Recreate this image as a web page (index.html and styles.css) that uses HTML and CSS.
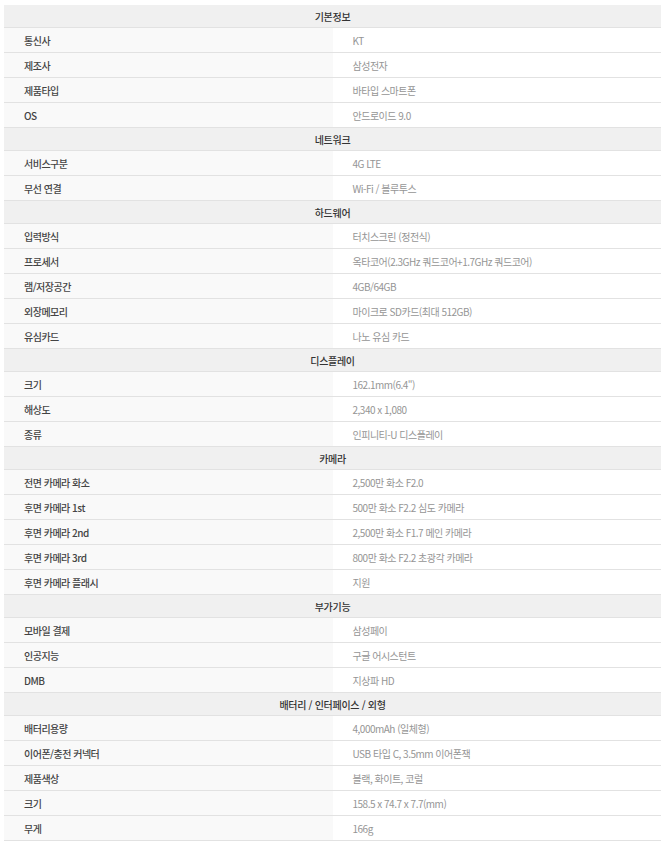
FILE: index.html
```html
<!DOCTYPE html>
<html lang="ko">
<head>
<meta charset="utf-8">
<link rel="stylesheet" href="styles.css">
</head>
<body>
<div class="wrap">
<table class="spec">
<tbody>
<tr class="sec"><th colspan="2">기본정보</th></tr>
<tr><td class="k">통신사</td><td class="v">KT</td></tr>
<tr><td class="k">제조사</td><td class="v">삼성전자</td></tr>
<tr><td class="k">제품타입</td><td class="v">바타입 스마트폰</td></tr>
<tr><td class="k">OS</td><td class="v">안드로이드 9.0</td></tr>
<tr class="sec"><th colspan="2">네트워크</th></tr>
<tr><td class="k">서비스구분</td><td class="v">4G LTE</td></tr>
<tr><td class="k">무선 연결</td><td class="v">Wi-Fi / 블루투스</td></tr>
<tr class="sec"><th colspan="2">하드웨어</th></tr>
<tr><td class="k">입력방식</td><td class="v">터치스크린 (정전식)</td></tr>
<tr><td class="k">프로세서</td><td class="v">옥타코어(2.3GHz 쿼드코어+1.7GHz 쿼드코어)</td></tr>
<tr><td class="k">램/저장공간</td><td class="v">4GB/64GB</td></tr>
<tr><td class="k">외장메모리</td><td class="v">마이크로 SD카드(최대 512GB)</td></tr>
<tr><td class="k">유심카드</td><td class="v">나노 유심 카드</td></tr>
<tr class="sec"><th colspan="2">디스플레이</th></tr>
<tr><td class="k">크기</td><td class="v">162.1mm(6.4")</td></tr>
<tr><td class="k">해상도</td><td class="v">2,340 x 1,080</td></tr>
<tr><td class="k">종류</td><td class="v">인피니티-U 디스플레이</td></tr>
<tr class="sec"><th colspan="2">카메라</th></tr>
<tr><td class="k">전면 카메라 화소</td><td class="v">2,500만 화소 F2.0</td></tr>
<tr><td class="k">후면 카메라 1st</td><td class="v">500만 화소 F2.2 심도 카메라</td></tr>
<tr><td class="k">후면 카메라 2nd</td><td class="v">2,500만 화소 F1.7 메인 카메라</td></tr>
<tr><td class="k">후면 카메라 3rd</td><td class="v">800만 화소 F2.2 초광각 카메라</td></tr>
<tr><td class="k">후면 카메라 플래시</td><td class="v">지원</td></tr>
<tr class="sec"><th colspan="2">부가기능</th></tr>
<tr><td class="k">모바일 결제</td><td class="v">삼성페이</td></tr>
<tr><td class="k">인공지능</td><td class="v">구글 어시스턴트</td></tr>
<tr><td class="k">DMB</td><td class="v">지상파 HD</td></tr>
<tr class="sec"><th colspan="2">배터리 / 인터페이스 / 외형</th></tr>
<tr><td class="k">배터리용량</td><td class="v">4,000mAh (일체형)</td></tr>
<tr><td class="k">이어폰/충전 커넥터</td><td class="v">USB 타입 C, 3.5mm 이어폰잭</td></tr>
<tr><td class="k">제품색상</td><td class="v">블랙, 화이트, 코럴</td></tr>
<tr><td class="k">크기</td><td class="v">158.5 x 74.7 x 7.7(mm)</td></tr>
<tr><td class="k">무게</td><td class="v">166g</td></tr>
</tbody>
</table>
</div>
</body>
</html>
```

FILE: styles.css
```css
html, body {
  margin: 0;
  padding: 0;
  background: #ffffff;
}
.wrap {
  padding: 5px 4px 0 4px;
}
.spec {
  width: 657px;
  border-collapse: collapse;
  table-layout: fixed;
  font-family: "Noto Sans CJK KR", "Noto Sans", sans-serif;
}
.spec th {
  height: 22px;
  padding: 0;
  background: #f0f0f0;
  border-bottom: 1px solid #e2e2e2;
  font-size: 10px;
  font-weight: 500;
  color: #333333;
  text-align: center;
  letter-spacing: -0.3px;
}
.spec td {
  height: 24px;
  padding: 0 0 0 20px;
  border-bottom: 1px solid #e2e2e2;
  font-size: 10px;
  text-align: left;
  letter-spacing: -0.5px;
  white-space: nowrap;
}
.spec td.k {
  width: 308px;
  background: #f9f9f9;
  color: #444444;
  font-weight: 500;
}
.spec td.v {
  background: #ffffff;
  color: #959595;
  font-weight: 400;
}
```
